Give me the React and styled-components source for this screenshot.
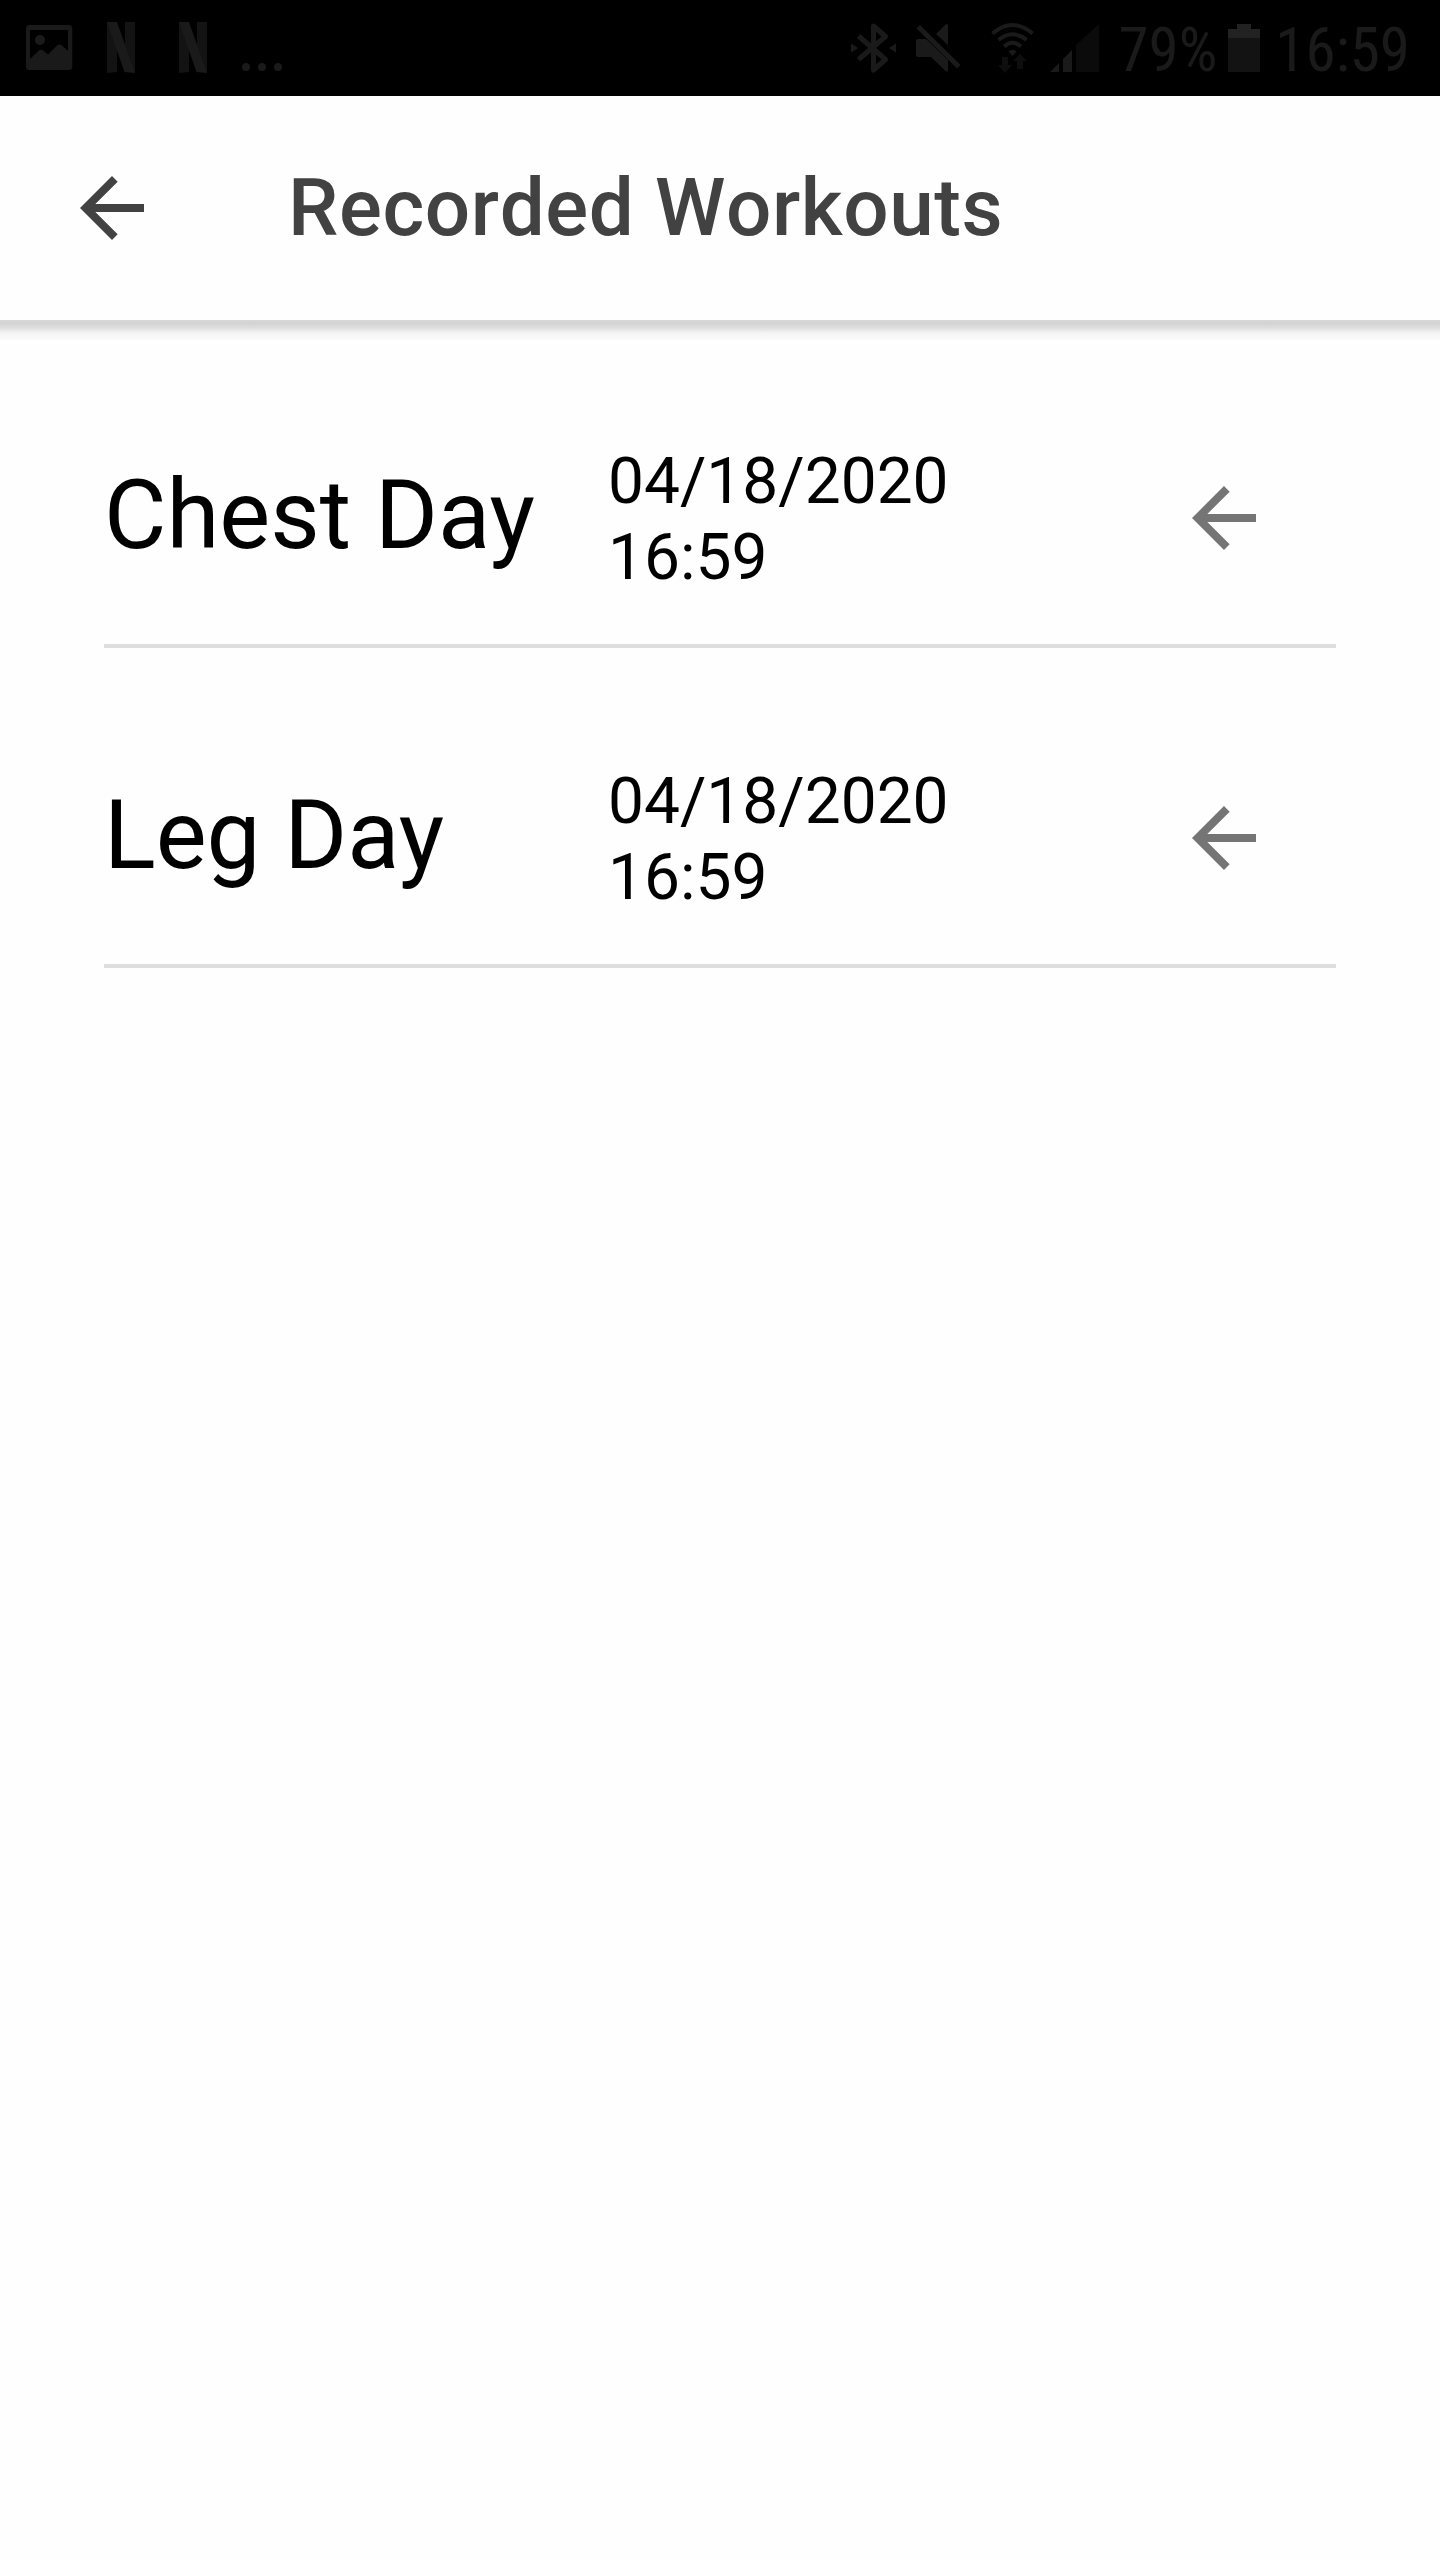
import React from "react";
import styled, { createGlobalStyle } from "styled-components";

const GlobalStyle = createGlobalStyle`
  *, *::before, *::after { box-sizing: border-box; }
  body {
    margin: 0;
    background: #fefefe;
    color: #000;
    font-family: Roboto, "Liberation Sans", sans-serif;
  }
`;

const Page = styled.div`
  min-height: 100vh;
  display: flex;
  flex-direction: column;
`;

const StatusBar = styled.div`
  height: 96px;
  padding: 0 30px 0 12px;
  display: flex;
  align-items: center;
  justify-content: space-between;
  background: #000;
  color: #1a1a1a;
`;

const StatusGroup = styled.div`
  display: flex;
  align-items: center;
`;

const StatusIcon = styled.svg`
  display: block;
  flex: none;
  height: 96px;
  fill: #1a1a1a;
`;

const StatusText = styled.span`
  padding-top: 4px;
  font-family: "Roboto Condensed", Roboto, sans-serif;
  font-size: 61px;
  line-height: 92px;
  white-space: nowrap;
`;

const AppBar = styled.header`
  position: relative;
  height: 224px;
  padding: 0 16px;
  display: flex;
  align-items: center;
  gap: 80px;
  background: #fefefe;
  color: #424242;

  &::after {
    content: "";
    position: absolute;
    top: 100%;
    left: 0;
    right: 0;
    height: 20px;
    background: linear-gradient(#d8d8d8, #d2d2d2 15%, #dfdfdf 40%, #f4f4f4 65%, #fbfbfb);
  }
`;

const Title = styled.h1`
  margin: 0;
  font-size: 80px;
  font-weight: 500;
  line-height: 96px;
  letter-spacing: 0.0075em;
  font-kerning: none;
  white-space: nowrap;
`;

const IconButton = styled.button`
  display: flex;
  padding: 48px;
  border: 0;
  border-radius: 50%;
  background: none;
  color: ${({ $tone }) => $tone};
  cursor: pointer;
`;

const ArrowSvg = styled.svg`
  width: 96px;
  height: 96px;
  fill: currentColor;
`;

const WorkoutList = styled.ul`
  margin: 0;
  padding: 72px 104px;
  display: flex;
  flex-direction: column;
  gap: 64px;
  list-style: none;
`;

const WorkoutRow = styled.li`
  display: grid;
  grid-template-columns: minmax(0, 63fr) minmax(0, 65fr) minmax(0, 26fr);
  align-items: center;
  padding: 30px 0;
  border-bottom: 4px solid #dedede;
`;

const WorkoutName = styled.h2`
  margin: 0;
  padding-bottom: 6px;
  font-size: 96px;
  font-weight: 400;
  line-height: 128px;
  white-space: nowrap;
`;

const Recorded = styled.time`
  display: flex;
  flex-direction: column;
  padding-top: 4px;
  font-size: 64px;
  line-height: 76px;
`;

function ArrowBack() {
  return (
    <ArrowSvg viewBox="0 0 24 24" aria-hidden="true">
      <path d="M20 11H7.83l5.59-5.59L12 4l-8 8 8 8 1.41-1.41L7.83 13H20v-2z" />
    </ArrowSvg>
  );
}

function PictureIcon() {
  return (
    <StatusIcon width="72" viewBox="12 0 72 96" aria-hidden="true">
      <path
        fillRule="evenodd"
        d="M29 25H69Q72.300 25 72.300 28.500V66.500Q72.300 70 69 70H29Q26 70 26 66.500V28.500Q26 25 29 25ZM30 30V59L39 50.500Q41 49 43 50.500L48 54.500L57 45.500Q59.500 43.500 62 45.500L68 51V30Z"
      />
      <circle cx="40" cy="40" r="5" />
    </StatusIcon>
  );
}

function StreamingIcon() {
  return (
    <StatusIcon width="72" viewBox="84 0 72 96" aria-hidden="true">
      <path fill="#131313" d="M107 22H117V72L107 73ZM125 22H135V73L125 71Z" />
      <path d="M107 22H117L135 73L124.500 72Z" />
    </StatusIcon>
  );
}

function MoreIcon() {
  return (
    <StatusIcon width="72" viewBox="228 0 72 96" aria-hidden="true">
      <circle cx="246" cy="67" r="4" />
      <circle cx="262" cy="67" r="4" />
      <circle cx="278" cy="67" r="4" />
    </StatusIcon>
  );
}

function BluetoothIcon() {
  return (
    <StatusIcon width="64" viewBox="842 0 64 96" aria-hidden="true">
      <path
        d="M858.500 36L885.500 59.500L873.500 70V26L885.500 36.500L858.500 59.500"
        fill="none"
        stroke="#1a1a1a"
        strokeWidth="5"
        strokeLinejoin="round"
      />
      <path d="M851 43.500L858 48L851 52.500ZM896 43.500L889 48L896 52.500Z" />
    </StatusIcon>
  );
}

function MuteIcon() {
  return (
    <StatusIcon width="70" viewBox="906 0 70 96" aria-hidden="true">
      <path d="M936 34L945.500 24.500Q948 23 948 26V45ZM918 39H926L948 60V70Q948 73 945.500 71L931 57H918Q916 57 916 55V41Q916 39 918 39Z" />
      <path d="M920 25L960.500 65L957 68.500L916.500 28.500Z" />
    </StatusIcon>
  );
}

function WifiIcon() {
  return (
    <StatusIcon width="66" viewBox="976 0 66 96" aria-hidden="true">
      <g fill="none" stroke="#1a1a1a" strokeWidth="4">
        <path d="M992.500 33.500Q1012.500 16.500 1032.500 33.500" />
        <path d="M998.500 40Q1012.500 28.500 1026.500 40" />
        <path d="M1004 46.500Q1012.500 39 1021 46.500" />
      </g>
      <path d="M1008.500 51.500Q1012.500 48 1016.500 51.500L1012.500 56Z" />
      <path
        fill="#0e0e0e"
        d="M1002 57H1008V65H1012L1005 73L998 65H1002ZM1017 69V61H1013L1020 54L1027 61H1023V69Z"
      />
    </StatusIcon>
  );
}

function SignalIcon() {
  return (
    <StatusIcon width="76" viewBox="1042 0 76 96" aria-hidden="true">
      <path d="M1050 72L1059 63V72ZM1063 59L1072 50V72H1063Z" />
      <path fill="#0b0b0b" d="M1076 45L1099 24V72H1076Z" />
    </StatusIcon>
  );
}

function BatteryIcon() {
  return (
    <StatusIcon width="58" viewBox="1218 0 58 96" aria-hidden="true">
      <path fill="#222" d="M1238 24H1252V29H1261V38H1229V29H1238Z" />
      <path fill="#131313" d="M1229 38H1261V72H1229Z" />
    </StatusIcon>
  );
}

const workouts = [
  { name: "Chest Day", date: "04/18/2020", time: "16:59", iso: "2020-04-18T16:59" },
  { name: "Leg Day", date: "04/18/2020", time: "16:59", iso: "2020-04-18T16:59" },
];

export default function App() {
  return (
    <Page>
      <GlobalStyle />
      <StatusBar>
        <StatusGroup>
          <PictureIcon />
          <StreamingIcon />
          <StreamingIcon />
          <MoreIcon />
        </StatusGroup>
        <StatusGroup>
          <BluetoothIcon />
          <MuteIcon />
          <WifiIcon />
          <SignalIcon />
          <StatusText>79%</StatusText>
          <BatteryIcon />
          <StatusText>16:59</StatusText>
        </StatusGroup>
      </StatusBar>
      <AppBar>
        <IconButton $tone="#424242" aria-label="Back">
          <ArrowBack />
        </IconButton>
        <Title>Recorded Workouts</Title>
      </AppBar>
      <main>
        <WorkoutList>
          {workouts.map((workout) => (
            <WorkoutRow key={workout.name}>
              <WorkoutName>{workout.name}</WorkoutName>
              <Recorded dateTime={workout.iso}>
                <span>{workout.date}</span>
                <span>{workout.time}</span>
              </Recorded>
              <IconButton $tone="#757575" aria-label={`Open ${workout.name}`}>
                <ArrowBack />
              </IconButton>
            </WorkoutRow>
          ))}
        </WorkoutList>
      </main>
    </Page>
  );
}
